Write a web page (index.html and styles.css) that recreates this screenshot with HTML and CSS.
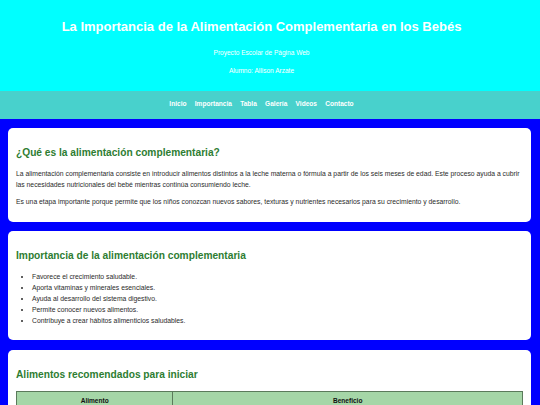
FILE: index.html
```html
<!DOCTYPE html>
<html lang="es">
<head>
<meta charset="utf-8">
<title>La Importancia de la Alimentación Complementaria en los Bebés</title>
<link rel="stylesheet" href="styles.css">
</head>
<body>
<header class="site-header">
  <h1>La Importancia de la Alimentación Complementaria en los Bebés</h1>
  <p>Proyecto Escolar de Página Web</p>
  <p>Alumno: Allison Arzate</p>
</header>
<nav class="site-nav">
  <ul>
    <li><a href="#inicio">Inicio</a></li>
    <li><a href="#importancia">Importancia</a></li>
    <li><a href="#tabla">Tabla</a></li>
    <li><a href="#galeria">Galería</a></li>
    <li><a href="#videos">Videos</a></li>
    <li><a href="#contacto">Contacto</a></li>
  </ul>
</nav>
<main class="content">
  <section class="card" id="inicio">
    <h2>¿Qué es la alimentación complementaria?</h2>
    <p>La alimentación complementaria consiste en introducir alimentos distintos a la leche materna o fórmula a partir de los seis meses de edad. Este proceso ayuda a cubrir las necesidades nutricionales del bebé mientras continúa consumiendo leche.</p>
    <p>Es una etapa importante porque permite que los niños conozcan nuevos sabores, texturas y nutrientes necesarios para su crecimiento y desarrollo.</p>
  </section>
  <section class="card" id="importancia">
    <h2>Importancia de la alimentación complementaria</h2>
    <ul>
      <li>Favorece el crecimiento saludable.</li>
      <li>Aporta vitaminas y minerales esenciales.</li>
      <li>Ayuda al desarrollo del sistema digestivo.</li>
      <li>Permite conocer nuevos alimentos.</li>
      <li>Contribuye a crear hábitos alimenticios saludables.</li>
    </ul>
  </section>
  <section class="card" id="tabla">
    <h2>Alimentos recomendados para iniciar</h2>
    <table class="food-table">
      <thead>
        <tr><th class="col-food">Alimento</th><th>Beneficio</th></tr>
      </thead>
      <tbody>
        <tr><td>Puré de zanahoria</td><td>Rica en vitamina A, ayuda a la vista.</td></tr>
        <tr><td>Puré de manzana</td><td>Aporta fibra y favorece la digestión.</td></tr>
      </tbody>
    </table>
  </section>
</main>
</body>
</html>
```

FILE: styles.css
```css
* { box-sizing: border-box; }

html, body {
  margin: 0;
  padding: 0;
}

body {
  background: #0000ff;
  font-family: "Liberation Sans", Arial, sans-serif;
  font-size: 6.55px;
  line-height: 1.68;
  color: #333333;
}

.site-header {
  background: #00ffff;
  color: #ffffff;
  text-align: center;
  padding: 7px 26px 6.5px 9px;
}

.site-header h1 {
  font-size: 13px;
  line-height: 1.7;
  margin: 9.4px 0 9.3px;
  font-weight: bold;
}

.site-header p {
  margin: 7.3px 0;
}

.site-nav {
  background: #48d1cc;
  padding: 0 26px 0 9px;
}

.site-nav ul {
  list-style: none;
  margin: 0;
  padding: 8.5px 0;
  display: flex;
  justify-content: center;
  gap: 8.3px;
}

.site-nav a {
  color: #ffffff;
  font-weight: bold;
  text-decoration: none;
}

.content {
  padding: 9px 9px 0 8px;
  display: flex;
  flex-direction: column;
  gap: 9.6px;
}

.card {
  background: #ffffff;
  border-radius: 5px;
  padding: 8px 8px 7px;
  font-size: 6.8px;
  line-height: 1.6;
  color: #2b2b2b;
}

.card h2 {
  font-size: 10.2px;
  line-height: 1.6;
  color: #2e7d32;
  margin: 9px 0 8px;
}

.card p {
  margin: 6.4px 0;
}

.card ul {
  margin: 6.4px 0;
  padding-left: 16px;
}

.food-table {
  width: 100%;
  border-collapse: collapse;
}

.food-table th,
.food-table td {
  border: 1px solid #5b7a5b;
  padding: 4px;
}

.food-table th {
  background: #a5d6a7;
  color: #111111;
  font-weight: bold;
  font-size: 6.55px;
}

.food-table .col-food {
  width: 30.9%;
}
```
